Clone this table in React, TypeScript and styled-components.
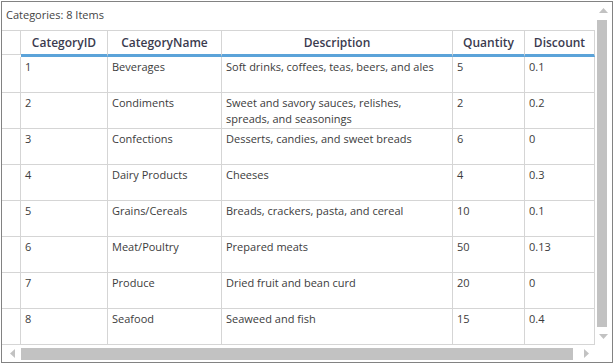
import styled, { createGlobalStyle } from 'styled-components'

const GlobalStyle = createGlobalStyle`
  html, body {
    margin: 0;
    padding: 0;
    background: #ffffff;
  }
  body {
    font-family: 'Open Sans', 'Noto Sans', sans-serif;
    font-size: 11px;
    color: #333333;
  }
`

type Category = {
  id: number
  name: string
  description: string
  quantity: number
  discount: string
}

const categories: Category[] = [
  { id: 1, name: 'Beverages', description: 'Soft drinks, coffees, teas, beers, and ales', quantity: 5, discount: '0.1' },
  { id: 2, name: 'Condiments', description: 'Sweet and savory sauces, relishes, spreads, and seasonings', quantity: 2, discount: '0.2' },
  { id: 3, name: 'Confections', description: 'Desserts, candies, and sweet breads', quantity: 6, discount: '0' },
  { id: 4, name: 'Dairy Products', description: 'Cheeses', quantity: 4, discount: '0.3' },
  { id: 5, name: 'Grains/Cereals', description: 'Breads, crackers, pasta, and cereal', quantity: 10, discount: '0.1' },
  { id: 6, name: 'Meat/Poultry', description: 'Prepared meats', quantity: 50, discount: '0.13' },
  { id: 7, name: 'Produce', description: 'Dried fruit and bean curd', quantity: 20, discount: '0' },
  { id: 8, name: 'Seafood', description: 'Seaweed and fish', quantity: 15, discount: '0.4' },
]

const columns = [
  { title: 'CategoryID', width: 87 },
  { title: 'CategoryName', width: 114 },
  { title: 'Description', width: 231 },
  { title: 'Quantity', width: 72 },
  { title: 'Discount', width: 70 },
]

const gridTemplate = `19px ${columns.map((c) => `${c.width}px`).join(' ')}`

const Frame = styled.div`
  margin: 1px;
  width: 612px;
  height: 362px;
  box-sizing: border-box;
  border: 1px solid #828282;
  display: grid;
  grid-template-columns: 593px 17px;
  grid-template-rows: 343px 17px;
  overflow: hidden;
`

const Content = styled.div`
  display: flex;
  flex-direction: column;
  overflow: hidden;
`

const Caption = styled.div`
  height: 29px;
  box-sizing: border-box;
  border-bottom: 1px solid #d5d5d5;
  padding: 0 0 4px 4px;
  display: flex;
  align-items: center;
  color: #444444;
`

const Row = styled.div<{ header?: boolean }>`
  display: grid;
  grid-template-columns: ${gridTemplate};
  height: ${({ header }) => (header ? '26px' : '36px')};
  flex-shrink: 0;
`

const RowHeaderCell = styled.div<{ header?: boolean }>`
  border-right: 1px solid #d5d5d5;
  border-bottom: 1px solid #d5d5d5;
  box-sizing: border-box;
  ${({ header }) => (header ? 'margin-bottom: 2px;' : '')}
`

const HeaderCell = styled.div`
  box-sizing: border-box;
  border-right: 1px solid #d5d5d5;
  border-bottom: 3px solid #5ba3d9;
  display: flex;
  align-items: center;
  justify-content: center;
  font-size: 12px;
  font-weight: 600;
  color: #3b3b4f;
  padding-bottom: 1px;
`

const Cell = styled.div`
  box-sizing: border-box;
  border-right: 1px solid #d5d5d5;
  border-bottom: 1px solid #d5d5d5;
  padding: 2px 8px 0 4px;
  line-height: 16px;
  color: #3c3c3c;
  overflow: hidden;
`

const VScroll = styled.div`
  display: flex;
  flex-direction: column;
  background: #ffffff;
`

const HScroll = styled.div`
  display: flex;
  align-items: center;
  background: #ffffff;
`

const Corner = styled.div`
  background: #ffffff;
`

const ArrowBox = styled.div<{ start?: boolean }>`
  width: ${({ start }) => (start ? '18px' : '17px')};
  height: 17px;
  box-sizing: border-box;
  padding-left: ${({ start }) => (start ? '3px' : '0')};
  display: flex;
  align-items: center;
  justify-content: center;
  flex-shrink: 0;
`

const VThumb = styled.div`
  width: 10px;
  margin: 1px 0 1px 2px;
  flex: 1;
  background: #c2c2c2;
`

const HThumb = styled.div`
  height: 12px;
  flex: 1;
  margin: 0 5px 0 1px;
  background: #c2c2c2;
`

const Arrow = ({ dir }: { dir: 'up' | 'down' | 'left' | 'right' }) => {
  const points = {
    up: '0,5 4.5,0 9,5',
    down: '0,0 4.5,5 9,0',
    left: '5,0 0,4.5 5,9',
    right: '0,0 5,4.5 0,9',
  }[dir]
  const vertical = dir === 'up' || dir === 'down'
  return (
    <svg width={vertical ? 9 : 5} height={vertical ? 5 : 9} viewBox={vertical ? '0 0 9 5' : '0 0 5 9'}>
      <polygon points={points} fill="#c2c2c2" />
    </svg>
  )
}

export default function App() {
  return (
    <>
      <GlobalStyle />
      <Frame>
        <Content>
          <Caption>Categories: 8 Items</Caption>
          <Row header>
            <RowHeaderCell header />
            {columns.map((c) => (
              <HeaderCell key={c.title}>{c.title}</HeaderCell>
            ))}
          </Row>
          {categories.map((c) => (
            <Row key={c.id}>
              <RowHeaderCell />
              <Cell>{c.id}</Cell>
              <Cell>{c.name}</Cell>
              <Cell>{c.description}</Cell>
              <Cell>{c.quantity}</Cell>
              <Cell>{c.discount}</Cell>
            </Row>
          ))}
        </Content>
        <VScroll>
          <ArrowBox>
            <Arrow dir="up" />
          </ArrowBox>
          <VThumb />
          <ArrowBox>
            <Arrow dir="down" />
          </ArrowBox>
        </VScroll>
        <HScroll>
          <ArrowBox start>
            <Arrow dir="left" />
          </ArrowBox>
          <HThumb />
          <ArrowBox>
            <Arrow dir="right" />
          </ArrowBox>
        </HScroll>
        <Corner />
      </Frame>
    </>
  )
}
